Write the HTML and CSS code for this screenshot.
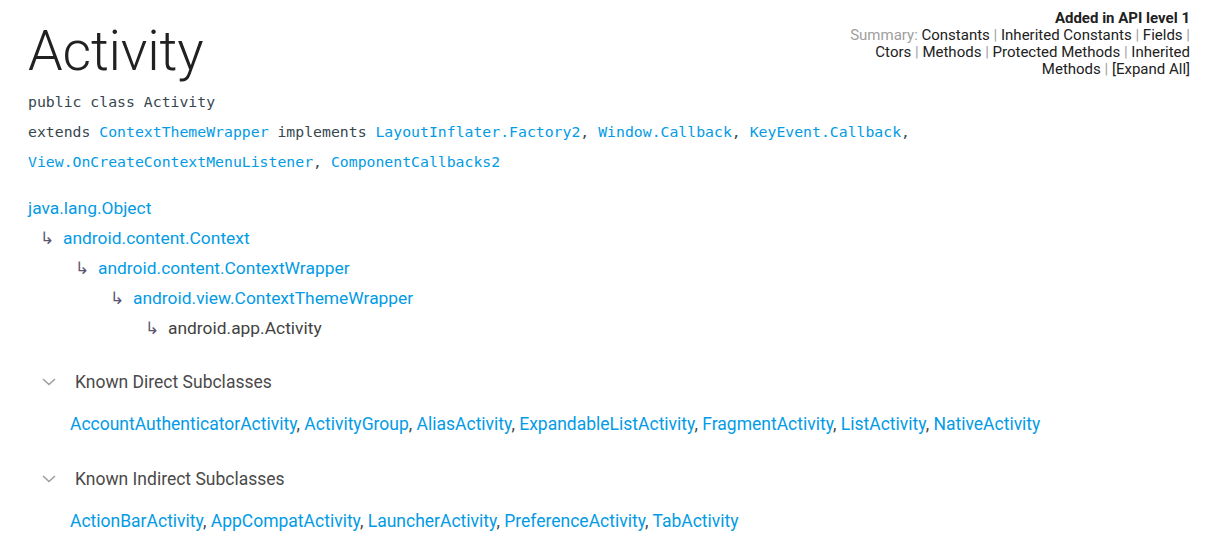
FILE: index.html
```html
<!DOCTYPE html>
<html>
<head>
<meta charset="utf-8">
<link rel="stylesheet" href="styles.css">
</head>
<body>
<div class="page">
  <div class="head">
    <h1 class="title">Activity</h1>
    <div class="summary">
      <div class="api">Added in API level 1</div>
      <div class="nav"><span class="muted">Summary:</span> <a>Constants</a> <span class="muted">|</span> <a>Inherited Constants</a> <span class="muted">|</span> <a>Fields</a> <span class="muted">|</span> <a>Ctors</a> <span class="muted">|</span> <a>Methods</a> <span class="muted">|</span> <a>Protected Methods</a> <span class="muted">|</span> <a>Inherited Methods</a> <span class="muted">|</span> <a>[Expand All]</a></div>
    </div>
  </div>
  <p class="code first">public class Activity</p>
  <p class="code">extends <a>ContextThemeWrapper</a> implements <a>LayoutInflater.Factory2</a>, <a>Window.Callback</a>, <a>KeyEvent.Callback</a>, <a>View.OnCreateContextMenuListener</a>, <a>ComponentCallbacks2</a></p>

  <div class="tree">
    <div class="lvl l0"><a>java.lang.Object</a></div>
    <div class="lvl l1"><span class="arrow">↳</span><a>android.content.Context</a></div>
    <div class="lvl l2"><span class="arrow">↳</span><a>android.content.ContextWrapper</a></div>
    <div class="lvl l3"><span class="arrow">↳</span><a>android.view.ContextThemeWrapper</a></div>
    <div class="lvl l4"><span class="arrow">↳</span><span class="cur">android.app.Activity</span></div>
  </div>

  <div class="sub">
    <div class="sub-head">
      <svg class="chev" width="14" height="8" viewBox="0 0 14 8"><path d="M1 1 L7 6.5 L13 1" fill="none" stroke="#9e9e9e" stroke-width="1.6"/></svg>
      <span>Known Direct Subclasses</span>
    </div>
    <div class="sub-list"><a>AccountAuthenticatorActivity</a>, <a>ActivityGroup</a>, <a>AliasActivity</a>, <a>ExpandableListActivity</a>, <a>FragmentActivity</a>, <a>ListActivity</a>, <a>NativeActivity</a></div>
  </div>
  <div class="sub">
    <div class="sub-head">
      <svg class="chev" width="14" height="8" viewBox="0 0 14 8"><path d="M1 1 L7 6.5 L13 1" fill="none" stroke="#9e9e9e" stroke-width="1.6"/></svg>
      <span>Known Indirect Subclasses</span>
    </div>
    <div class="sub-list"><a>ActionBarActivity</a>, <a>AppCompatActivity</a>, <a>LauncherActivity</a>, <a>PreferenceActivity</a>, <a>TabActivity</a></div>
  </div>
</div>
</body>
</html>
```
FILE: styles.css
```css
html, body {
  margin: 0;
  padding: 0;
  background: #fff;
}
body {
  font-family: Roboto, "Noto Sans", sans-serif;
  color: #212121;
}
a {
  color: #039be5;
  text-decoration: none;
}
.page {
  padding: 0 29px 0 28px;
}
.head {
  display: flex;
  justify-content: space-between;
  align-items: flex-start;
}
.title {
  margin: 18px 0 0 0;
  font-weight: 300;
  font-size: 55.5px;
  line-height: 67px;
  color: #212121;
  letter-spacing: -0.2px;
}
.summary {
  margin-top: 10px;
  width: 352px;
  text-align: right;
  font-size: 15px;
  line-height: 17px;
}
.summary .api {
  font-weight: 700;
  color: #212121;
}
.summary a {
  color: #212121;
}
.summary .muted {
  color: #9e9e9e;
}
.code {
  margin: 0;
  font-family: "DejaVu Sans Mono", monospace;
  font-size: 14.8px;
  line-height: 30px;
  color: #37474f;
}
.code.first {
  margin-top: 2px;
}
.tree {
  margin-top: 16px;
  font-size: 17.4px;
  line-height: 30px;
}
.lvl {
  display: flex;
  align-items: baseline;
  height: 30px;
}
.arrow {
  width: 23px;
  color: #5c5470;
  font-family: "DejaVu Sans", sans-serif;
  font-size: 17px;
  line-height: 30px;
  font-weight: 300;
}
.l1 { padding-left: 12px; }
.l2 { padding-left: 47px; }
.l3 { padding-left: 82px; }
.l4 { padding-left: 117px; }
.cur {
  color: #424242;
}
.sub {
  margin-top: 24px;
}
.sub + .sub {
  margin-top: 25px;
}
.sub-head {
  display: flex;
  align-items: center;
  font-size: 17.5px;
  line-height: 30px;
  color: #4a4a4a;
  padding-left: 14px;
}
.chev {
  margin-right: 19px;
}
.sub-list {
  margin-top: 12px;
  padding-left: 42px;
  font-size: 17.5px;
  line-height: 30px;
  color: #424242;
}
```
